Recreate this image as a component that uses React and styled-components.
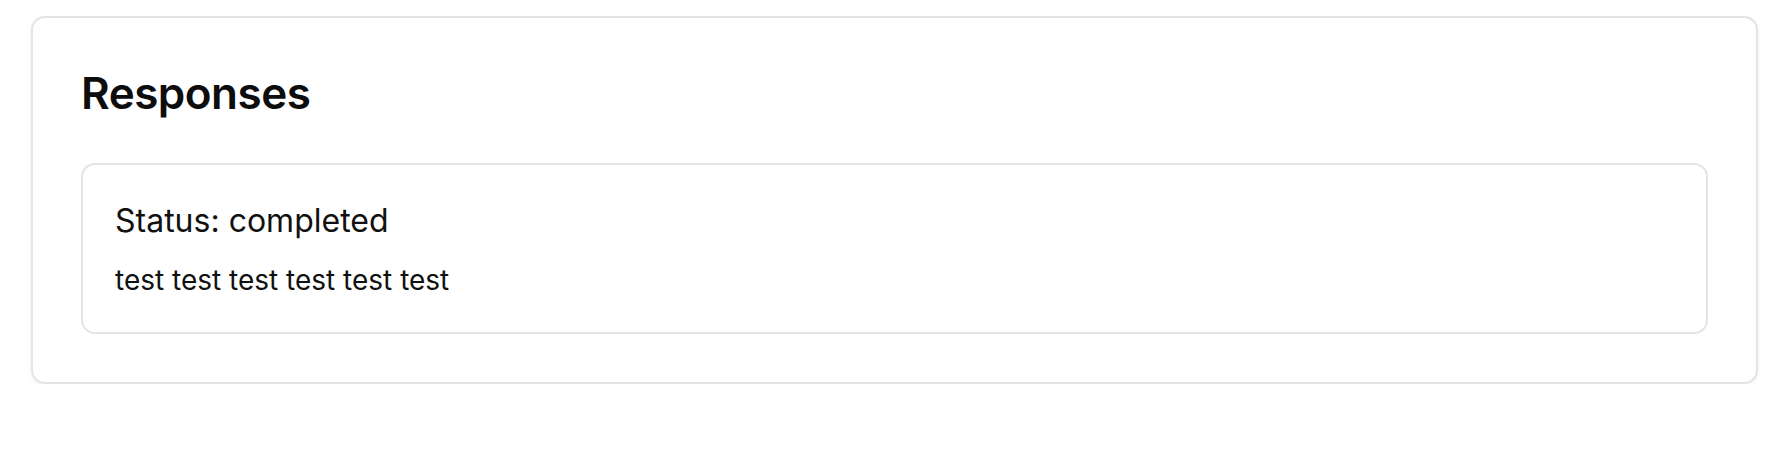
import React from "react";
import styled, { createGlobalStyle } from "styled-components";

const Global = createGlobalStyle`
  html, body { margin: 0; padding: 0; background: #ffffff; }
  body { font-family: Inter, "Noto Sans", sans-serif; color: #111111; }
`;

const Page = styled.main`
  padding: 16px 32px 0 31px;
`;

const Card = styled.section`
  border: 2px solid #e4e4e4;
  border-radius: 14px;
  padding: 49px 48px 48px 48px;
  box-shadow: 0 2px 4px rgba(0, 0, 0, 0.06);
  background: #fff;
`;

const Title = styled.h1`
  margin: 0 0 44px 0;
  font-size: 44px;
  font-weight: 600;
  letter-spacing: -0.5px;
  line-height: 52px;
  color: #0d0d0d;
`;

const Response = styled.article`
  border: 2px solid #e4e4e4;
  border-radius: 14px;
  padding: 33px 32px 34px 32px;
`;

const Status = styled.h2`
  margin: 0 0 18px 0;
  font-size: 32px;
  font-weight: 400;
  line-height: 46px;
  color: #111;
`;

const Body = styled.p`
  margin: 0;
  font-size: 28px;
  line-height: 36px;
  color: #111;
`;

const responses = [{ status: "completed", text: "test test test test test test" }];

export default function App() {
  return (
    <>
      <Global />
      <Page>
        <Card>
          <Title>Responses</Title>
          {responses.map((r, i) => (
            <Response key={i}>
              <Status>Status: {r.status}</Status>
              <Body>{r.text}</Body>
            </Response>
          ))}
        </Card>
      </Page>
    </>
  );
}
